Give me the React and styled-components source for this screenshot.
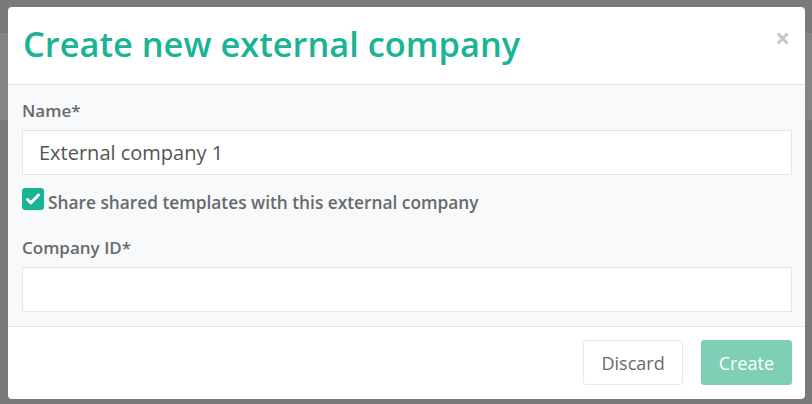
import styled, { createGlobalStyle } from "styled-components";

const GlobalStyle = createGlobalStyle`
  html, body {
    margin: 0;
    padding: 0;
  }
  body {
    font-family: "Open Sans", "Noto Sans", sans-serif;
    background: #7a7a7a;
  }
`;

const Backdrop = styled.div`
  width: 812px;
  height: 404px;
  box-sizing: border-box;
  padding: 7px 7px 5px 8px;
  background: linear-gradient(
    #7a7a7a 33px,
    #848484 33px,
    #848484 120px,
    #7a7a7a 120px
  );
`;

const Dialog = styled.div`
  background: #fff;
  border-radius: 4px;
  overflow: hidden;
  height: 100%;
  display: flex;
  flex-direction: column;
`;

const Header = styled.div`
  display: flex;
  align-items: flex-start;
  justify-content: space-between;
  height: 78px;
  box-sizing: border-box;
  padding: 14px 15px 0 15px;
  border-bottom: 1px solid #e5e6e7;
`;

const Title = styled.h2`
  margin: 0;
  font-size: 34.4px;
  font-weight: 600;
  line-height: 46px;
  color: #1ab394;
`;

const Close = styled.button`
  border: 0;
  background: none;
  padding: 0;
  margin-top: 4px;
  font-family: "Open Sans", sans-serif;
  font-size: 26px;
  font-weight: 700;
  line-height: 26px;
  color: #c6c6c6;
  cursor: pointer;
`;

const Body = styled.div`
  background: #f8f9fa;
  padding: 15px 13px 14px 14px;
  border-bottom: 1px solid #e5e6e7;
`;

const Field = styled.div`
  display: flex;
  flex-direction: column;
  gap: 8px;
`;

const Label = styled.label`
  font-size: 17px;
  font-weight: 600;
  color: #676a6c;
  line-height: 22px;
`;

const Input = styled.input`
  box-sizing: border-box;
  height: 45px;
  width: 100%;
  border: 1px solid #e5e6e7;
  background: #fff;
  padding: 0 16px;
  font-family: "Open Sans", sans-serif;
  font-size: 20px;
  color: #555;
  outline: none;
`;

const CheckRow = styled.label`
  display: flex;
  align-items: flex-start;
  gap: 4px;
  margin: 13px 0 22px;
  font-size: 17.3px;
  line-height: 24px;
  font-weight: 600;
  color: #676a6c;
`;

const CheckText = styled.span`
  margin-top: 3px;
`;

const Box = styled.span`
  width: 22px;
  height: 22px;
  border-radius: 3px;
  background: #1ab394;
  display: flex;
  align-items: center;
  justify-content: center;
`;

const Footer = styled.div`
  flex: 1;
  display: flex;
  justify-content: flex-end;
  align-items: flex-start;
  gap: 18px;
  padding: 13px 13px 0 0;
`;

const Button = styled.button`
  height: 45px;
  box-sizing: border-box;
  padding: 0 17px;
  border-radius: 3px;
  font-family: "Open Sans", sans-serif;
  font-size: 18px;
  border: 1px solid ${(p) => (p.$primary ? "#7ecfb6" : "#e7eaec")};
  background: ${(p) => (p.$primary ? "#7ecfb6" : "#fff")};
  color: ${(p) => (p.$primary ? "#fff" : "#676a6c")};
`;

function Check() {
  return (
    <svg width="14" height="12" viewBox="0 0 14 12">
      <path
        d="M1.5 6.5 L5 9.8 L12.5 2"
        fill="none"
        stroke="#fff"
        strokeWidth="3"
        strokeLinecap="round"
        strokeLinejoin="round"
      />
    </svg>
  );
}

export default function App() {
  return (
    <>
      <GlobalStyle />
      <Backdrop>
        <Dialog>
          <Header>
            <Title>Create new external company</Title>
            <Close>×</Close>
          </Header>
          <Body>
            <Field>
              <Label>Name*</Label>
              <Input defaultValue="External company 1" />
            </Field>
            <CheckRow>
              <Box>
                <Check />
              </Box>
              <CheckText>
                Share shared templates with this external company
              </CheckText>
            </CheckRow>
            <Field>
              <Label>Company ID*</Label>
              <Input />
            </Field>
          </Body>
          <Footer>
            <Button>Discard</Button>
            <Button $primary>Create</Button>
          </Footer>
        </Dialog>
      </Backdrop>
    </>
  );
}
